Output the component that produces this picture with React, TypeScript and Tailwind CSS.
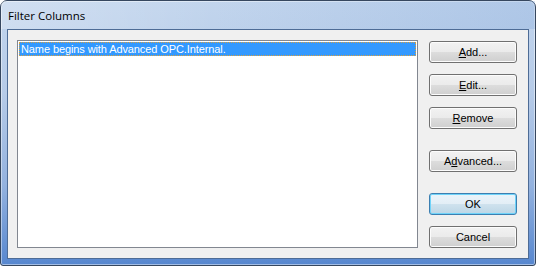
import type { ReactNode } from "react";

const uiFont = { fontFamily: '"Liberation Sans", Arial, sans-serif' };

interface DialogButtonProps {
	children: ReactNode;
	isDefault?: boolean;
}

function DialogButton({ children, isDefault }: DialogButtonProps) {
	const look = isDefault
		? "border-[#3c7fb1] shadow-[inset_0_0_0_1px_#6fd3f9] bg-[linear-gradient(to_bottom,#eaf4fa_0%,#e3eef6_48%,#cfe2ee_50%,#bcd6e6_100%)]"
		: "border-[#707070] shadow-[inset_0_0_0_1px_#fcfcfc] bg-[linear-gradient(to_bottom,#f2f2f2_0%,#ebebeb_48%,#dddddd_50%,#cfcfcf_100%)]";
	return (
		<button
			type="button"
			className={`flex h-[22px] w-[88px] items-center justify-center rounded-[3px] border text-[11px] leading-none text-black ${look}`}
			style={uiFont}
		>
			{children}
		</button>
	);
}

export default function App() {
	return (
		<div className="h-[266px] w-[536px] overflow-hidden bg-white">
			<div className="flex h-[266px] w-[536px] flex-col rounded-t-[7px] rounded-b-[3px] border border-[#36475f] bg-[linear-gradient(to_bottom,#c2d5ed_0%,#b6cbe8_35%,#93b2df_70%,#5787cf_100%)] shadow-[inset_0_0_0_1px_rgba(255,255,255,0.45)]">
				{/* title bar */}
				<div className="flex h-[28px] shrink-0 items-center bg-[linear-gradient(to_right,rgba(255,255,255,0.25),rgba(255,255,255,0)_40%,rgba(120,160,215,0.25))] pl-[7px]">
					<span
						className="pt-[2px] text-[11.5px] text-black"
						style={{ fontFamily: '"Open Sans", "Noto Sans", sans-serif' }}
					>
						Filter Columns
					</span>
				</div>

				{/* client area */}
				<div className="mx-[6px] flex h-[230px] border border-[#4e6c96] bg-[#f0f0f0] pt-[10px] pr-[11px] pb-[10px] pl-[9px]">
					<div
						className="h-[208px] w-[401px] shrink-0 border border-[#828790] bg-white p-px"
						style={uiFont}
					>
						<div className="flex h-[14px] items-center border border-dotted border-[#d9a040] bg-[#3399ff] pl-px text-[11px] leading-none tracking-[-0.1px] text-white">
							Name begins with Advanced OPC.Internal.
						</div>
					</div>

					<div className="ml-[11px] flex flex-col pt-px">
						<DialogButton>
							<span>
								<span className="underline">A</span>dd...
							</span>
						</DialogButton>
						<div className="h-[11px]" />
						<DialogButton>
							<span>
								<span className="underline">E</span>dit...
							</span>
						</DialogButton>
						<div className="h-[11px]" />
						<DialogButton>
							<span>
								<span className="underline">R</span>emove
							</span>
						</DialogButton>
						<div className="h-[21px]" />
						<DialogButton>
							<span>
								A<span className="underline">d</span>vanced...
							</span>
						</DialogButton>
						<div className="h-[21px]" />
						<DialogButton isDefault>OK</DialogButton>
						<div className="h-[11px]" />
						<DialogButton>Cancel</DialogButton>
					</div>
				</div>
			</div>
		</div>
	);
}
